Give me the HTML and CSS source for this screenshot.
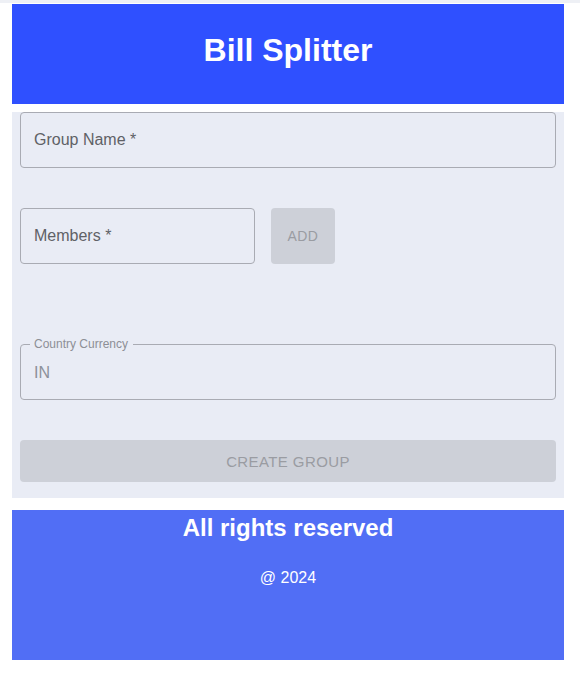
FILE: index.html
```html
<!DOCTYPE html>
<html>
<head>
<meta charset="utf-8">
<link rel="stylesheet" href="styles.css">
</head>
<body>
<div class="topline"></div>
<div class="page">
  <header class="header">
    <h1 class="title">Bill Splitter</h1>
  </header>
  <main class="panel">
    <div class="field field-full">
      <span class="placeholder">Group Name *</span>
    </div>
    <div class="row">
      <div class="field field-members">
        <span class="placeholder">Members *</span>
      </div>
      <div class="btn btn-add">ADD</div>
    </div>
    <fieldset class="outlined">
      <legend class="legend">Country Currency</legend>
      <span class="value">IN</span>
    </fieldset>
    <div class="btn btn-create">CREATE GROUP</div>
  </main>
  <footer class="footer">
    <h2 class="footer-title">All rights reserved</h2>
    <p class="footer-year">@ 2024</p>
  </footer>
</div>
</body>
</html>
```
FILE: styles.css
```css
* { box-sizing: border-box; }
html, body { margin: 0; padding: 0; background: #fff; }
body { font-family: "Liberation Sans", Arial, sans-serif; }
.topline { height: 3px; background: #eef0f5; margin-bottom: 1px; }
.page { width: 552px; margin-left: 12px; }
.header { height: 100px; background: #2f50ff; text-align: center; overflow: hidden; }
.title { margin: 28px 0 0; font-weight: bold; font-size: 32px; line-height: 37px; color: #fff; }
.panel { margin-top: 8px; background: #e9ecf5; padding: 0 8px 16px; display: flex; flex-direction: column; }
.field { height: 56px; border: 1px solid #a9abb3; border-radius: 4px; display: flex; align-items: center; padding-left: 13px; }
.placeholder { font-size: 16px; color: #5f6166; }
.row { display: flex; gap: 16px; margin-top: 40px; }
.field-members { width: 235px; }
.btn { border-radius: 4px; background: #cdd0d8; color: #9a9ca2; display: flex; align-items: center; justify-content: center; font-size: 14px; letter-spacing: 0.4px; }
.btn-add { width: 64px; height: 56px; }
.outlined { margin: 74px 0 0; height: 62px; border: 1px solid #a9abb3; border-radius: 4px; padding: 0 13px; }
.legend { font-size: 12px; color: #8d8f96; padding: 0 5px 0 4px; margin-left: -4px; line-height: 12px; }
.value { display: block; font-size: 16px; color: #8d919a; margin-top: 13px; line-height: 20px; }
.btn-create { margin-top: 40px; height: 42px; font-size: 15px; letter-spacing: 0.4px; }
.footer { margin-top: 12px; height: 150px; background: #516ef5; text-align: center; color: #fff; padding-top: 1px; overflow: hidden; }
.footer-title { margin: 0; font-size: 24px; line-height: 34px; font-weight: bold; }
.footer-year { margin: 21px 0 0; font-size: 16px; line-height: 24px; }
```
